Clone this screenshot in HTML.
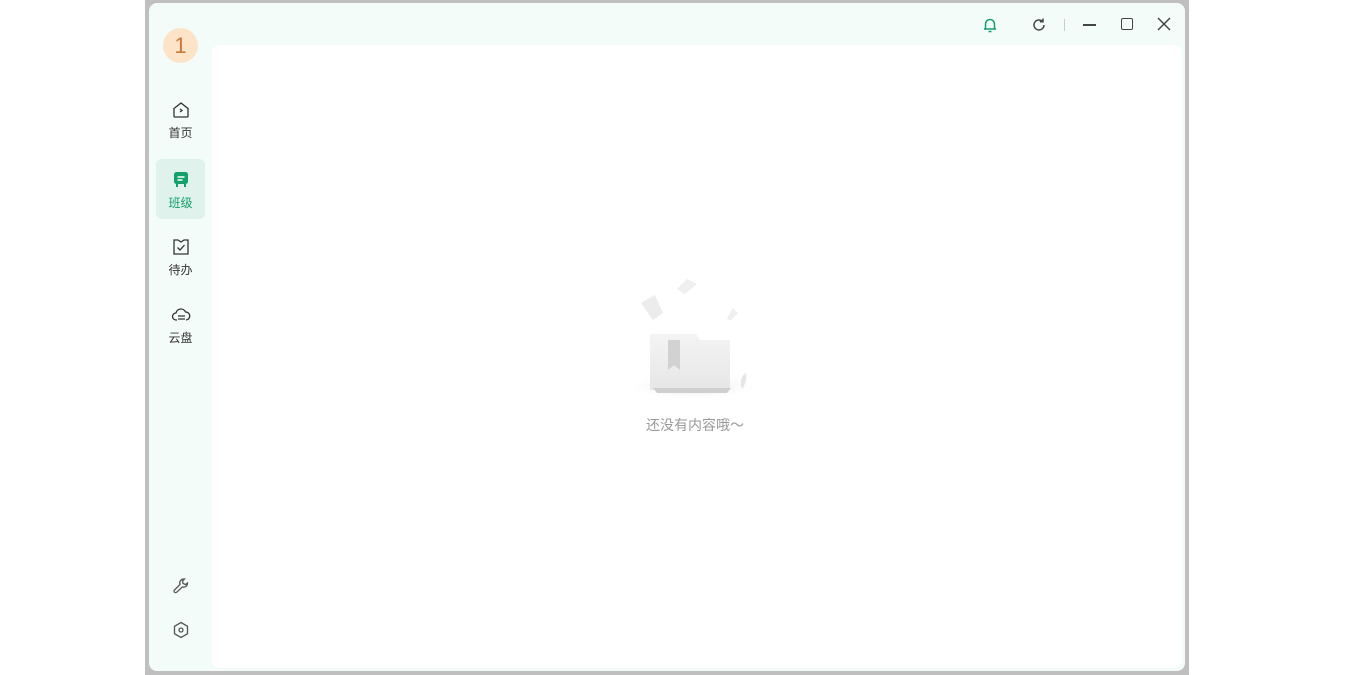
<!DOCTYPE html>
<html><head><meta charset="utf-8"><style>
*{margin:0;padding:0;box-sizing:border-box}
body{width:1350px;height:675px;background:#fff;position:relative;overflow:hidden;font-family:"Liberation Sans","Noto Sans CJK SC",sans-serif}
.frame{position:absolute;left:145px;top:0;width:1044px;height:675px;background:#bfbfbf}
.win{position:absolute;left:149px;top:3px;width:1036px;height:668px;background:#f4fcf9;border-radius:8px}
.panel{position:absolute;left:63px;top:42px;width:970px;height:623px;background:#fff;border-radius:8px}
.av{position:absolute;left:14px;top:25px;width:35px;height:35px;border-radius:50%;background:#fde3c8;color:#c87a3a;font-size:22px;text-align:center;line-height:35px}
.nav{position:absolute;left:7px;width:49px;height:60px;border-radius:6px;text-align:center;font-size:12px;color:#333}
.nav svg{display:block;margin:9px auto 4px}
.act{background:#dff2ec;color:#14a06a}
.ic{position:absolute}
</style></head><body>
<div class="frame"></div>
<div class="win">
<div class="panel"></div>
<div class="av">1</div>
<div class="nav" style="top:88px"><svg width="20" height="20" viewBox="0 0 20 20" fill="none" stroke="#333" stroke-width="1.3"><path d="M3 8.5L10 3l7 5.5V16a1 1 0 0 1-1 1H4a1 1 0 0 1-1-1z"/><path d="M9 9l2 1.5L9 12"/></svg>首页</div>
<div class="nav act" style="top:156px"><svg width="20" height="20" viewBox="0 0 20 20" style="margin-top:10px;margin-bottom:5px"><rect x="3" y="3" width="14" height="12" rx="2.5" fill="#14a06a"/><path d="M6 15v3M14 15v3" stroke="#14a06a" stroke-width="2"/><path d="M6.5 8h7M6.5 11h5" stroke="#fff" stroke-width="1.4"/></svg>班级</div>
<div class="nav" style="top:225px"><svg width="20" height="20" viewBox="0 0 20 20" fill="none" stroke="#333" stroke-width="1.3"><path d="M3 3h4l3 2 3-2h4v14H3z"/><path d="M6.5 10.5l2.5 2.5 4.5-5"/></svg>待办</div>
<div class="nav" style="top:293px"><svg width="20" height="20" viewBox="0 0 20 20" fill="none" stroke="#333" stroke-width="1.3"><path d="M6 15H5a3.5 3.5 0 0 1 0-7 5 5 0 0 1 9.5-1A4 4 0 0 1 15 15"/><path d="M7 11h7M7 14h7"/></svg>云盘</div>
<svg class="ic" style="left:22px;top:573px" width="20" height="20" viewBox="0 0 20 20" fill="none" stroke="#555" stroke-width="1.3"><path d="M12.5 3a4 4 0 0 0-3.5 5.5L3.5 14a1.5 1.5 0 0 0 2.2 2.2L11.3 11A4 4 0 0 0 16.5 7l-2 1.5-2.5-1 -.5-2.5 2-2z"/></svg>
<svg class="ic" style="left:22px;top:617px" width="20" height="20" viewBox="0 0 20 20" fill="none" stroke="#555" stroke-width="1.3"><path d="M10 2.5l6.5 3.75v7.5L10 17.5l-6.5-3.75v-7.5z"/><circle cx="10" cy="10" r="2"/></svg>
<svg class="ic" style="left:832px;top:13px" width="18" height="18" viewBox="0 0 18 18" fill="none" stroke="#14a06a" stroke-width="1.5"><path d="M4.5 13V8a4.5 4.5 0 0 1 9 0v5M3 13h12M7.5 15.5h3"/></svg>
<svg class="ic" style="left:881px;top:13px" width="18" height="18" viewBox="0 0 18 18" fill="none" stroke="#444" stroke-width="1.5"><path d="M14 9a5 5 0 1 1-1.5-3.6"/><path d="M13 2.5v3.2H9.8"/></svg>
<div class="ic" style="left:915px;top:16px;width:1px;height:12px;background:#ccc"></div>
<div class="ic" style="left:934px;top:21px;width:13px;height:1.5px;background:#444"></div>
<div class="ic" style="left:972px;top:15px;width:12px;height:12px;border:1.5px solid #444;border-radius:2px"></div>
<svg class="ic" style="left:1008px;top:14px" width="14" height="14" viewBox="0 0 14 14" stroke="#444" stroke-width="1.5"><path d="M1 1l12 12M13 1L1 13"/></svg>
<svg class="ic" style="left:480px;top:273px" width="130" height="125" viewBox="0 0 130 125">
<defs><linearGradient id="g" x1="0" y1="0" x2="0" y2="1"><stop offset="0" stop-color="#f4f4f4"/><stop offset="1" stop-color="#e6e6e6"/></linearGradient><radialGradient id="s" cx="0.5" cy="0.5" r="0.5"><stop offset="0" stop-color="#f0f0f0"/><stop offset="1" stop-color="#fff"/></radialGradient></defs>
<ellipse cx="65" cy="110" rx="62" ry="13" fill="url(#s)"/>
<path d="M12 27l14-8 8 18-10 7z" fill="#ececec"/>
<path d="M48 13l10-10 10 5-12 10z" fill="#efefef"/>
<path d="M98 42l6-10 5 5-8 8z" fill="#efefef"/>
<path d="M21 58h46l4 6h30v50H21z" fill="url(#g)"/>
<path d="M39 64h12v30l-6-5-6 5z" fill="#d2d2d2"/>
<path d="M24 112h78l-4 5H28z" fill="#cfcfcf"/>
<path d="M113 113c-3-8 0-14 4-16 1 7-1 12-4 16z" fill="#e5e5e5"/>
</svg>
<div class="ic" style="left:486px;top:412px;width:120px;text-align:center;font-size:14px;color:#999">还没有内容哦～</div>
</div>
</body></html>
